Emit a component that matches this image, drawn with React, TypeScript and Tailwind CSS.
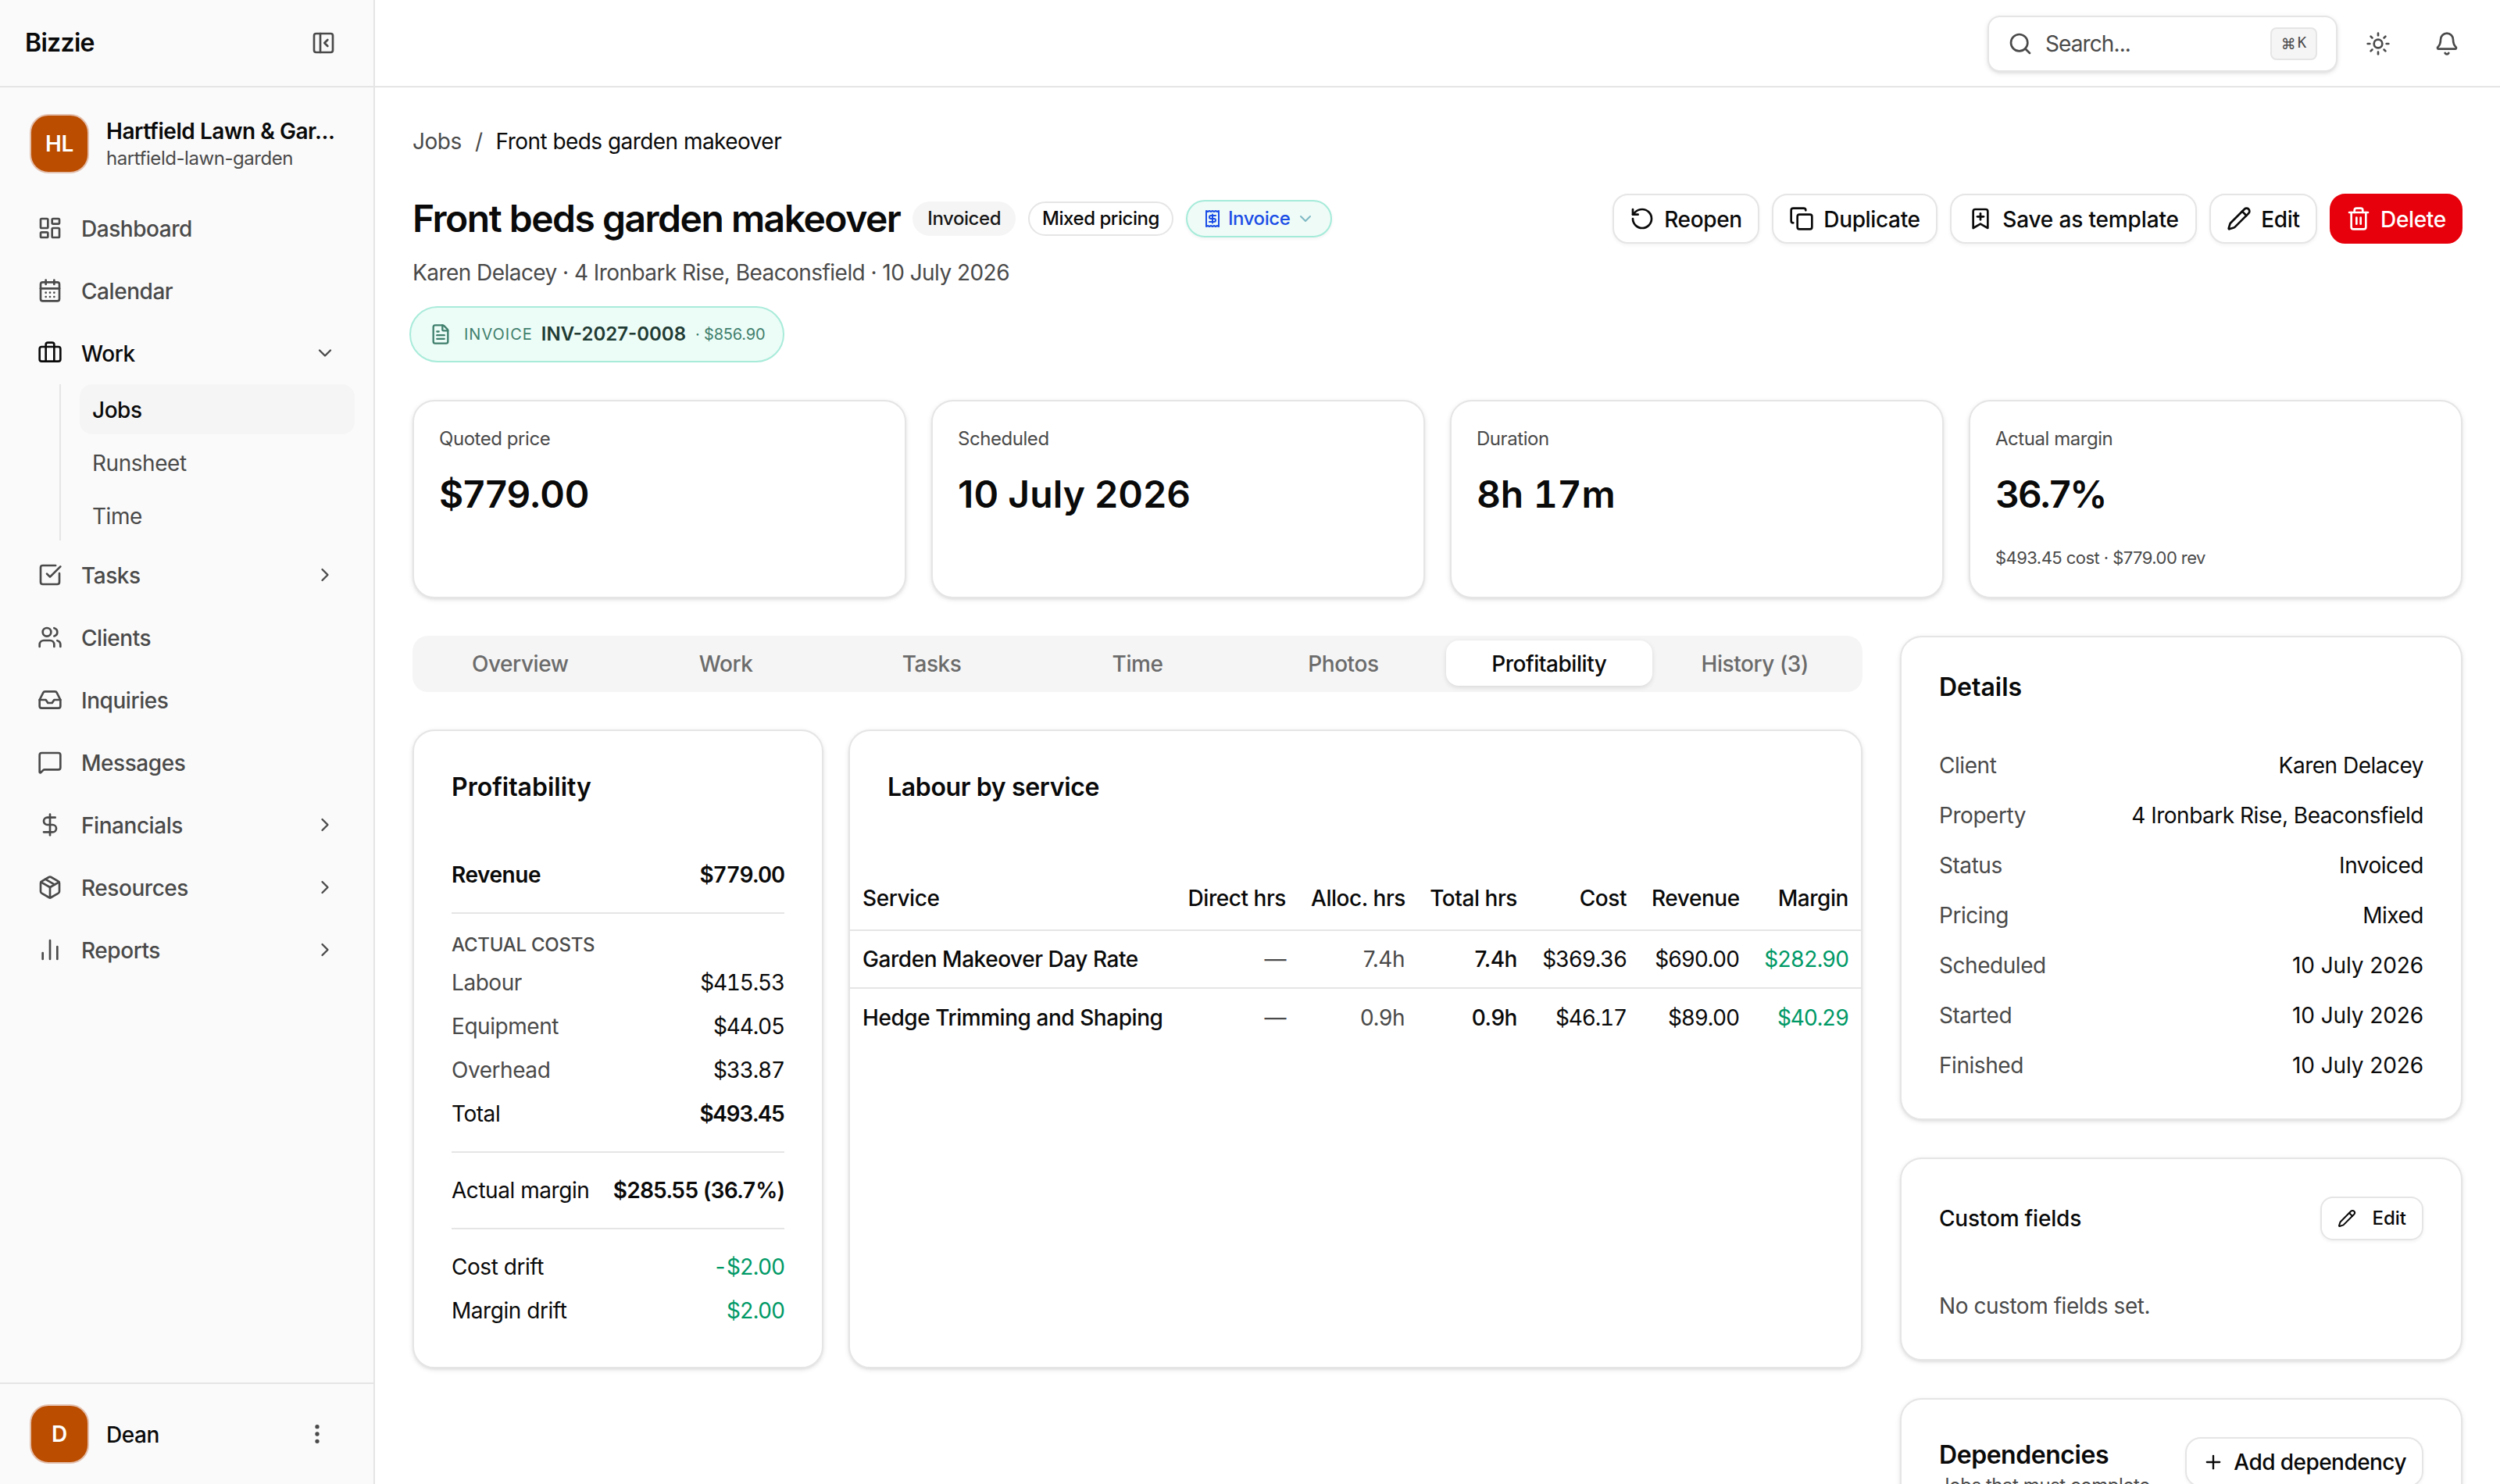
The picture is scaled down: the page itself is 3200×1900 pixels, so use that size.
import clsx from "clsx"
import {
  Bell,
  BookmarkPlus,
  Briefcase,
  CalendarDays,
  ChartNoAxesColumn,
  ChevronDown,
  ChevronRight,
  Copy,
  DollarSign,
  EllipsisVertical,
  FileText,
  Inbox,
  LayoutDashboard,
  MessageSquare,
  Package,
  PanelLeftClose,
  Pencil,
  Plus,
  Receipt,
  RotateCcw,
  Search,
  SquareCheckBig,
  Sun,
  Trash2,
  Users,
} from "lucide-react"
import type { LucideIcon } from "lucide-react"
import type { ReactNode } from "react"

type NavEntry = {
  label: string
  icon: LucideIcon
  more?: boolean
  children?: string[]
}

const nav: NavEntry[] = [
  { label: "Dashboard", icon: LayoutDashboard },
  { label: "Calendar", icon: CalendarDays },
  { label: "Work", icon: Briefcase, children: ["Jobs", "Runsheet", "Time"] },
  { label: "Tasks", icon: SquareCheckBig, more: true },
  { label: "Clients", icon: Users },
  { label: "Inquiries", icon: Inbox },
  { label: "Messages", icon: MessageSquare },
  { label: "Financials", icon: DollarSign, more: true },
  { label: "Resources", icon: Package, more: true },
  { label: "Reports", icon: ChartNoAxesColumn, more: true },
]

const stats = [
  { label: "Quoted price", value: "$779.00", className: "tracking-[-0.2px]" },
  { label: "Scheduled", value: "10 July 2026", className: "tracking-[0.1px]" },
  { label: "Duration", value: "8h 17m", className: "tracking-[-0.2px] tabular-nums" },
  { label: "Actual margin", value: "36.7%", note: "$493.45 cost · $779.00 rev", className: "tracking-[-1.6px]" },
]

const tabs = ["Overview", "Work", "Tasks", "Time", "Photos", "Profitability", "History (3)"]

const services = [
  { name: "Garden Makeover Day Rate", alloc: "7.4h", total: "7.4h", cost: "$369.36", revenue: "$690.00", margin: "$282.90" },
  { name: "Hedge Trimming and Shaping", alloc: "0.9h", total: "0.9h", cost: "$46.17", revenue: "$89.00", margin: "$40.29" },
]

const details = [
  ["Client", "Karen Delacey"],
  ["Property", "4 Ironbark Rise, Beaconsfield"],
  ["Status", "Invoiced"],
  ["Pricing", "Mixed"],
  ["Scheduled", "10 July 2026"],
  ["Started", "10 July 2026"],
  ["Finished", "10 July 2026"],
]

const Card = ({ className, children }: { className?: string; children: ReactNode }) => (
  <section
    className={clsx(
      "rounded-[28px] border-2 border-[#e5e5e5] bg-white shadow-[0_2px_6px_rgba(0,0,0,0.1),0_2px_4px_-2px_rgba(0,0,0,0.1)]",
      className
    )}
  >
    {children}
  </section>
)

const Button = ({
  icon: Icon,
  children,
  className,
  danger,
}: {
  icon: LucideIcon
  children: ReactNode
  className?: string
  danger?: boolean
}) => (
  <button
    className={clsx(
      "flex h-16 items-center justify-center gap-3 rounded-[20px] border-2 font-medium whitespace-nowrap",
      danger
        ? "border-[#e7000b] bg-[#e7000b] text-white"
        : "border-[#e5e5e5] bg-white shadow-[0_2px_4px_rgba(0,0,0,0.05)]",
      className
    )}
  >
    <Icon size={32} />
    <span className="pt-0.5">{children}</span>
  </button>
)

const Avatar = ({ children }: { children: string }) => (
  <div className="flex size-[76px] shrink-0 items-center justify-center rounded-[24px] border-2 border-[#e3bfae] bg-[#bb4d00] font-semibold text-white">
    {children}
  </div>
)

const Sidebar = () => {
  return (
    <aside className="flex w-[480px] shrink-0 flex-col border-r-2 border-[#e5e5e5] bg-[#fafafa]">
      <div className="flex h-28 shrink-0 items-center justify-between border-b-2 border-[#e5e5e5] pr-12 pl-8">
        <span className="text-[32px] font-semibold tracking-[-0.7px]">Bizzie</span>
        <PanelLeftClose size={32} className="text-[#4a4a4a]" />
      </div>
      <div className="mt-[34px] flex items-center gap-[22px] pl-[38px]">
        <Avatar>HL</Avatar>
        <div className="whitespace-nowrap">
          <div className="leading-[38px] font-semibold">Hartfield Lawn &amp; Gar...</div>
          <div className="text-[24px] leading-[32px] text-[#4a4a4a]">hartfield-lawn-garden</div>
        </div>
      </div>
      <nav className="mt-[34px] flex flex-1 flex-col gap-2 pr-6 pl-12">
        {nav.map(({ label, icon: Icon, more, children }) => (
          <div key={label}>
            <div
              className={clsx(
                "flex h-[72px] items-center gap-6 pr-6 font-medium",
                children ? "text-[#0a0a0a]" : "text-[#4a4a4a]"
              )}
            >
              <Icon size={32} />
              <span className="flex-1 pt-px">{label}</span>
              {children && <ChevronDown size={28} className="text-[#4a4a4a]" />}
              {more && <ChevronRight size={28} />}
            </div>
            {children && (
              <div className="mt-1 ml-7 flex flex-col gap-1 border-l-2 border-[#e5e5e5] pl-6">
                {children.map((child, i) => (
                  <div
                    key={child}
                    className={clsx(
                      "flex h-16 items-center rounded-2xl pt-0.5 pl-4",
                      i === 0 ? "bg-[#f5f5f5] font-medium" : "text-[#4a4a4a]"
                    )}
                  >
                    {child}
                  </div>
                ))}
              </div>
            )}
          </div>
        ))}
      </nav>
      <div className="flex h-[130px] shrink-0 items-center gap-[22px] border-t-2 border-[#e5e5e5] pr-14 pl-[38px]">
        <Avatar>D</Avatar>
        <span className="flex-1 pt-px font-medium">Dean</span>
        <EllipsisVertical size={32} className="text-[#4a4a4a]" />
      </div>
    </aside>
  )
}

const TopBar = () => {
  return (
    <header className="flex h-28 shrink-0 items-center justify-end border-b-2 border-[#e5e5e5] pt-0.5 pr-[52px] text-[#4a4a4a]">
      <div className="flex h-[72px] w-[448px] items-center gap-4 rounded-2xl border-2 border-[#e5e5e5] bg-white px-6 shadow-[0_2px_6px_rgba(0,0,0,0.1),0_2px_4px_-2px_rgba(0,0,0,0.1)]">
        <Search size={32} />
        <span className="flex-1 tracking-[-0.9px]">Search...</span>
        <kbd className="flex h-[42px] w-[60px] items-center justify-center gap-0.5 rounded-lg border-2 border-[#e5e5e5] bg-[#f5f5f5] tracking-normal">
          <span className="font-['DejaVu_Sans'] text-[19px]">⌘</span>
          <span className="pb-1 font-['DejaVu_Sans_Mono'] text-[19px]">K</span>
        </kbd>
      </div>
      <Sun size={32} className="mr-14 ml-9" />
      <Bell size={32} />
    </header>
  )
}

const JobHeader = () => {
  return (
    <div>
      <div className="flex gap-[17px] pt-0.5 leading-[38px] text-[#4a4a4a]">
        <span>Jobs</span>
        <span>/</span>
        <span className="tracking-[-0.55px] text-[#0a0a0a]">Front beds garden makeover</span>
      </div>
      <div className="mt-12 flex items-center justify-between">
        <div className="flex items-center gap-4">
          <h1 className="text-[48px] leading-[64px] font-semibold tracking-[-1.5px]">Front beds garden makeover</h1>
          <span className="flex h-11 items-center rounded-full bg-[#f5f5f5] px-[19px] text-[24px] font-medium text-[#171717]">
            Invoiced
          </span>
          <span className="flex h-11 items-center rounded-full border-2 border-[#e5e5e5] px-4 text-[24px] font-medium">
            Mixed pricing
          </span>
          <span className="flex h-12 items-center gap-2 rounded-full border-2 border-[#a5ebd9] bg-[#effbf7] px-5 text-[24px] font-medium text-[#1a4de6] shadow-[0_2px_4px_rgba(0,0,0,0.05)]">
            <Receipt size={24} />
            Invoice
            <ChevronDown size={24} className="text-[#7fb8c4]" />
          </span>
        </div>
        <div className="flex gap-4 tracking-[-0.35px]">
          <Button icon={RotateCcw} className="w-[188px]">
            Reopen
          </Button>
          <Button icon={Copy} className="w-[212px]">
            Duplicate
          </Button>
          <Button icon={BookmarkPlus} className="w-[316px] tracking-[-0.15px]">
            Save as template
          </Button>
          <Button icon={Pencil} className="w-[138px]">
            Edit
          </Button>
          <Button icon={Trash2} className="w-[170px]" danger>
            Delete
          </Button>
        </div>
      </div>
      <p className="mt-4 pt-0.5 leading-[38px] tracking-[-0.55px] text-[#4a4a4a]">
        Karen Delacey · 4 Ironbark Rise, Beaconsfield · 10 July 2026
      </p>
      <div className="mt-6 -ml-1 flex h-[72px] w-[480px] items-center rounded-full border-2 border-[#a8ebd9] bg-[#ecfcf7] pl-6 text-[#3f7f6c]">
        <FileText size={28} />
        <span className="ml-4 text-[20px] tracking-[1px]">INVOICE</span>
        <span className="ml-[11px] text-[24px] font-semibold tracking-normal text-[#1f3b33]">INV-2027-0008</span>
        <span className="ml-3 text-[20px] tracking-[-0.2px]">· $856.90</span>
      </div>
    </div>
  )
}

type LineProps = {
  label: string
  value: string
  muted?: boolean
  bold?: boolean
  green?: boolean
}

const Line = ({ label, value, muted, bold, green }: LineProps) => (
  <div className="flex justify-between pt-px leading-[39px] whitespace-nowrap">
    <span className={clsx(muted && "text-[#4a4a4a]")}>{label}</span>
    <span
      className={clsx(
        "tabular-nums",
        bold ? "font-semibold tracking-[-1.1px]" : "tracking-[-1.2px]",
        green && "text-[#009966]"
      )}
    >
      {value}
    </span>
  </div>
)

const Divider = () => <div className="my-3 h-0.5 bg-[#e5e5e5]" />

const Profitability = () => {
  return (
    <Card className="w-[526px] shrink-0 px-12 pt-12 pb-[52px]">
      <h2 className="text-[32px] leading-[47px] font-semibold tracking-normal">Profitability</h2>
      <div className="mt-[69px] flex flex-col gap-4">
        <div className="flex justify-between pt-px leading-[39px] font-semibold">
          <span>Revenue</span>
          <span className="tracking-[-1.1px] tabular-nums">$779.00</span>
        </div>
        <Divider />
        <div className="-mt-1 -mb-1 text-[24px] leading-8 font-medium tracking-[-0.25px] text-[#4a4a4a]">ACTUAL COSTS</div>
        <Line label="Labour" value="$415.53" muted />
        <Line label="Equipment" value="$44.05" muted />
        <Line label="Overhead" value="$33.87" muted />
        <Line label="Total" value="$493.45" bold />
        <Divider />
        <Line label="Actual margin" value="$285.55 (36.7%)" bold />
        <Divider />
        <Line label="Cost drift" value="-$2.00" green />
        <Line label="Margin drift" value="$2.00" green />
      </div>
    </Card>
  )
}

const LabourByService = () => {
  return (
    <Card className="flex-1">
      <h2 className="px-12 pt-12 text-[32px] leading-[47px] font-semibold tracking-[-0.35px]">Labour by service</h2>
      <table className="mt-[78px] w-full table-fixed border-collapse text-right whitespace-nowrap">
        <thead>
          <tr className="h-[82px] border-b-2 border-[#e5e5e5]">
            <th className="w-[416px] px-4 text-left font-medium">Service</th>
            <th className="w-[158px] px-4 font-medium">Direct hrs</th>
            <th className="w-[152px] px-4 font-medium">Alloc. hrs</th>
            <th className="w-[144px] px-4 font-medium">Total hrs</th>
            <th className="w-[140px] px-4 font-medium">Cost</th>
            <th className="w-[144px] px-4 font-medium">Revenue</th>
            <th className="w-[140px] px-4 font-medium">Margin</th>
          </tr>
        </thead>
        <tbody>
          {services.map((row) => (
            <tr key={row.name} className="h-[74px] border-b-2 border-[#e5e5e5] last:border-0">
              <td className="px-4 text-left font-medium">{row.name}</td>
              <td className="px-4 text-[#4a4a4a]">—</td>
              <td className="px-4 text-[#4a4a4a]">{row.alloc}</td>
              <td className="px-4 font-medium">{row.total}</td>
              <td className="px-4 tracking-[-1.2px] tabular-nums">{row.cost}</td>
              <td className="px-4 tracking-[-1.2px] tabular-nums">{row.revenue}</td>
              <td className="px-4 tracking-[-1.2px] text-[#009966] tabular-nums">{row.margin}</td>
            </tr>
          ))}
        </tbody>
      </table>
    </Card>
  )
}

const SideColumn = () => {
  return (
    <div className="flex w-[720px] shrink-0 flex-col gap-12">
      <Card className="px-12 pt-10 pb-12">
        <h2 className="text-[32px] leading-[47px] font-semibold tracking-normal">Details</h2>
        <dl className="mt-[57px] flex flex-col gap-6">
          {details.map(([label, value]) => (
            <div key={label} className="flex justify-between pt-px leading-[39px]">
              <dt className="text-[#4a4a4a]">{label}</dt>
              <dd className={clsx(value.startsWith("10") ? "tracking-[-0.1px]" : "tracking-[-0.5px]")}>{value}</dd>
            </div>
          ))}
        </dl>
      </Card>
      <Card className="h-[260px] px-12 pt-12">
        <div className="flex items-center justify-between">
          <h3 className="font-medium tracking-[-0.2px]">Custom fields</h3>
          <button className="flex h-14 items-center gap-5 rounded-2xl border-2 border-[#e5e5e5] px-5 text-[24px] font-medium tracking-normal shadow-[0_2px_4px_rgba(0,0,0,0.05)]">
            <Pencil size={24} />
            Edit
          </button>
        </div>
        <p className="mt-16 pt-px leading-[39px] text-[#4a4a4a]">No custom fields set.</p>
      </Card>
      <Card className="flex justify-between px-12 pt-12 pb-12">
        <div>
          <h2 className="text-[32px] leading-[46px] font-semibold">Dependencies</h2>
          <p className="w-[290px] text-[24px] leading-8 text-[#4a4a4a]">Jobs that must complete</p>
        </div>
        <button className="flex h-16 items-center gap-3 rounded-[20px] border-2 border-[#e5e5e5] px-5 font-medium tracking-[-0.55px] whitespace-nowrap shadow-[0_2px_4px_rgba(0,0,0,0.05)]">
          <Plus size={28} />
          Add dependency
        </button>
      </Card>
    </div>
  )
}

const App = () => {
  return (
    <div className="flex h-[1900px] w-[3200px] overflow-hidden bg-white font-['Inter',sans-serif] text-[28px] leading-10 tracking-[-0.45px] text-[#0a0a0a]">
      <Sidebar />
      <div className="flex min-w-0 flex-1 flex-col">
        <TopBar />
        <main className="flex-1 overflow-hidden px-12 pt-12">
          <JobHeader />
          <div className="mt-12 grid grid-cols-4 gap-8">
            {stats.map((stat) => (
              <Card key={stat.label} className="h-[254px] px-8 pt-8">
                <div className="text-[24px] leading-8 text-[#4a4a4a]">{stat.label}</div>
                <div className={clsx("mt-[23px] text-[48px] leading-[64px] font-semibold", stat.className)}>
                  {stat.value}
                </div>
                {stat.note && (
                  <div className="mt-[33px] text-[22px] leading-8 tracking-[-0.55px] text-[#4a4a4a]">{stat.note}</div>
                )}
              </Card>
            ))}
          </div>
          <div className="mt-12 flex gap-12">
            <div className="min-w-0 flex-1">
              <div className="flex h-[72px] rounded-[20px] bg-[#f5f5f5] p-1.5">
                {tabs.map((tab) => (
                  <div
                    key={tab}
                    className={clsx(
                      "flex h-[58px] flex-1 items-center justify-center rounded-2xl pt-0.5 font-medium",
                      tab === "Profitability" ? "bg-white shadow-[0_2px_6px_rgba(0,0,0,0.12)]" : "text-[#6b6b6b]"
                    )}
                  >
                    {tab}
                  </div>
                ))}
              </div>
              <div className="mt-12 flex gap-8">
                <Profitability />
                <LabourByService />
              </div>
            </div>
            <SideColumn />
          </div>
        </main>
      </div>
    </div>
  )
}

export default App
